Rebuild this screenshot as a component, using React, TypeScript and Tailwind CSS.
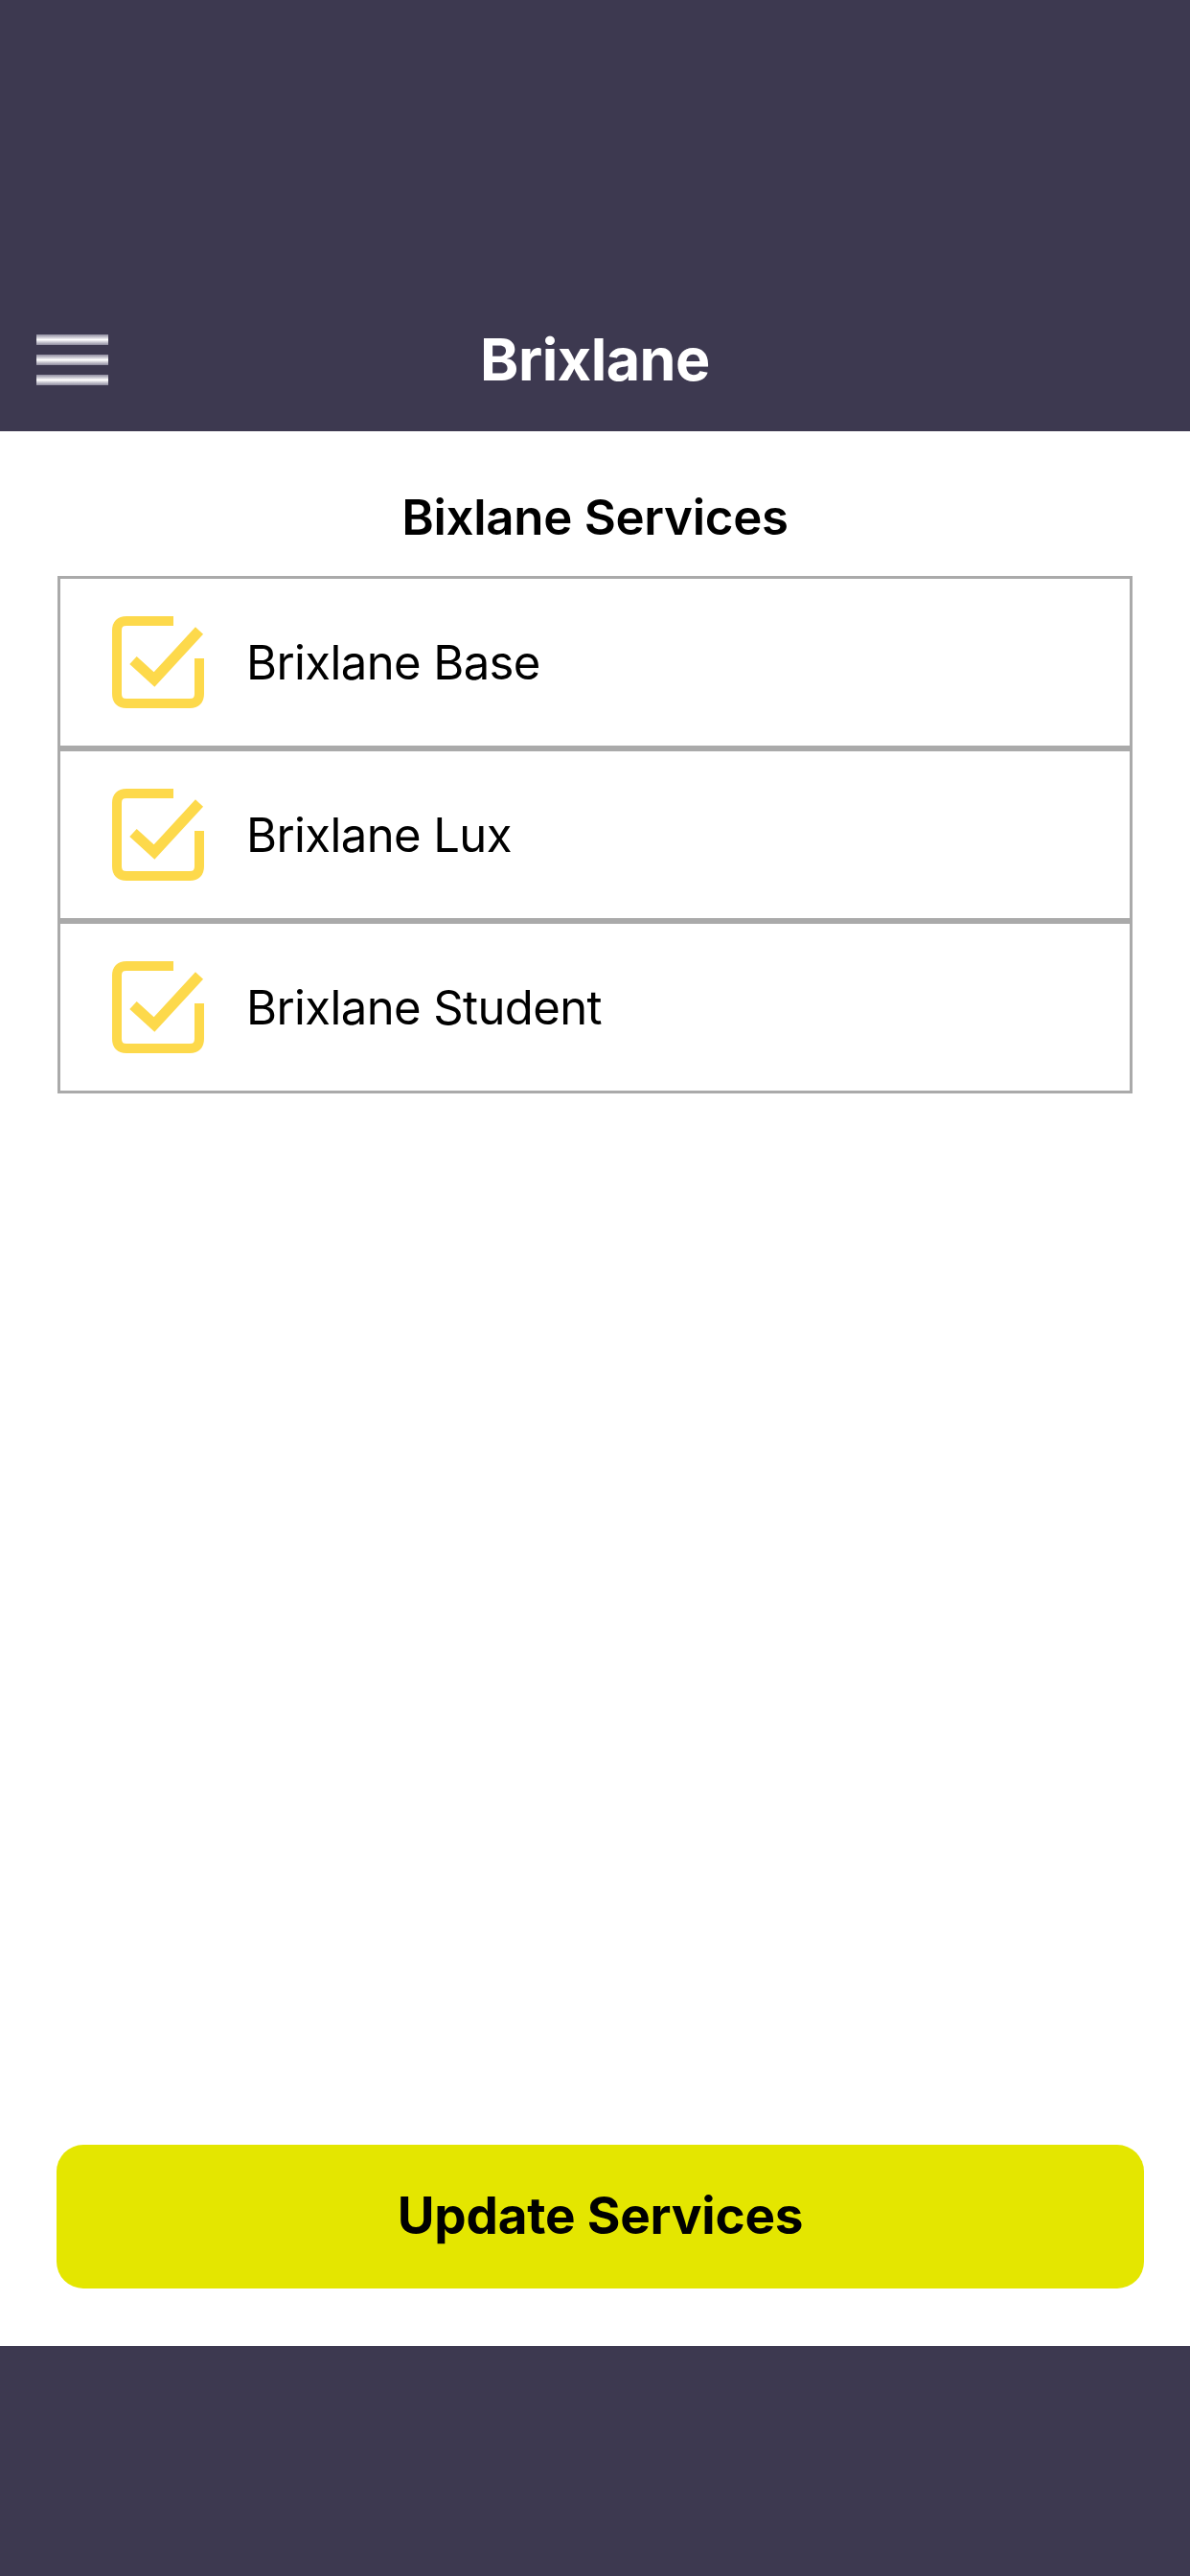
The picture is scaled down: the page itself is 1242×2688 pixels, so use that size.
import React from "react";

/* ================= DATA ================= */

const services = ["Brixlane Base", "Brixlane Lux", "Brixlane Student"];

/* ================= MAIN COMPONENT ================= */

export default function App() {
  return (
    <div
      className="flex min-h-[2688px] w-full flex-col bg-white"
      style={{ fontFamily: "Inter, 'Noto Sans', 'Liberation Sans', sans-serif" }}
    >
      {/* HEADER */}
      <header className="flex h-[450px] items-end bg-[#3d3950]">
        <div className="grid h-[150px] w-full grid-cols-[1fr_auto_1fr] items-center">
          <div className="pl-[38px]">
            <MenuIcon />
          </div>
          <h1 className="text-[61px] font-bold leading-none tracking-[-0.5px] text-white">
            Brixlane
          </h1>
          <div />
        </div>
      </header>

      {/* CONTENT */}
      <main className="flex flex-1 flex-col">
        <h2 className="mb-[30px] mt-[59px] h-[62px] text-center text-[51px] font-semibold leading-[62px] tracking-[-0.3px] text-black">
          Bixlane Services
        </h2>

        <ul className="mx-[60px] flex flex-col">
          {services.map((name) => (
            <li
              key={name}
              className="flex h-[180px] items-center border-[3px] border-[#aaaaaa] pl-[54px]"
            >
              <CheckIcon />
              <span className="ml-[44px] text-[49px] leading-none tracking-[-0.6px] text-black">
                {name}
              </span>
            </li>
          ))}
        </ul>

        <div className="flex-1" />

        <div className="pb-[60px] pl-[59px]">
          <button
            type="button"
            className="flex h-[150px] w-[1135px] items-center justify-center rounded-[28px] bg-[#e4e600] text-[53px] font-bold tracking-[-0.2px] text-black"
          >
            Update Services
          </button>
        </div>
      </main>

      {/* FOOTER */}
      <footer className="h-[240px] bg-[#3d3950]" />
    </div>
  );
}

/* ================= ICONS ================= */

function MenuIcon() {
  return (
    <div className="flex w-[75px] flex-col gap-[10px]">
      <span className="block h-[11px] bg-linear-to-b from-[#8f8c9f] via-white to-[#8f8c9f]" />
      <span className="block h-[11px] bg-linear-to-b from-[#8f8c9f] via-white to-[#8f8c9f]" />
      <span className="block h-[11px] bg-linear-to-b from-[#8f8c9f] via-white to-[#8f8c9f]" />
    </div>
  );
}

function CheckIcon() {
  return (
    <svg
      width="96"
      height="96"
      viewBox="0 0 96 96"
      fill="none"
      stroke="#fdd94b"
      strokeWidth="10"
      className="shrink-0"
    >
      <path d="M64 5H15Q5 5 5 15V81Q5 91 15 91H81Q91 91 91 81V44" />
      <path d="M22 46L44 66L91 15" strokeWidth="11" strokeLinejoin="miter" />
    </svg>
  );
}
